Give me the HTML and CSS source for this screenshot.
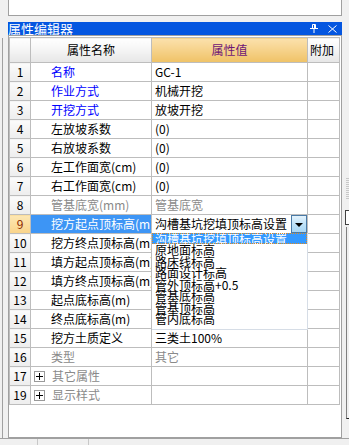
FILE: index.html
```html
<!DOCTYPE html>
<html lang="zh-CN">
<head>
    <meta charset="UTF-8">
    <title>属性编辑器</title>
    <link rel="stylesheet" href="styles.css">
</head>
<body>
    <div class="window">
        <div class="side side-left"><div class="side-line"></div></div>
        <div class="main">
            <div class="top-box"></div>
            <div class="caption">
                <span class="caption-title">属性编辑器</span>
                <span class="caption-btns">
                    <svg width="8" height="9" viewBox="0 0 8 9">
                        <path d="M2.5 0.5h3v4h-3z M0 4.5h8 M4 4.5v4.5" fill="none" stroke="#fff" stroke-width="1"/>
                        <path d="M4.5 0.5v4" stroke="#fff" stroke-width="1"/>
                    </svg>
                    <svg width="9" height="8" viewBox="0 0 9 8">
                        <path d="M0.5 0.5l8 7 M8.5 0.5l-8 7" stroke="#fff" stroke-width="1" fill="none"/>
                    </svg>
                </span>
            </div>
            <div class="panel">
                <table class="grid">
                    <colgroup>
                        <col class="c-num">
                        <col class="c-name">
                        <col class="c-value">
                        <col class="c-extra">
                    </colgroup>
                    <thead>
                        <tr>
                            <th class="h-num"></th>
                            <th class="h-name">属性名称</th>
                            <th class="h-value">属性值</th>
                            <th class="h-extra">附加</th>
                        </tr>
                    </thead>
                    <tbody>
                        <tr><td class="num">1</td><td class="name blue">名称</td><td class="value">GC-1</td><td></td></tr>
                        <tr><td class="num">2</td><td class="name blue">作业方式</td><td class="value">机械开挖</td><td></td></tr>
                        <tr><td class="num">3</td><td class="name blue">开挖方式</td><td class="value">放坡开挖</td><td></td></tr>
                        <tr><td class="num">4</td><td class="name">左放坡系数</td><td class="value">(0)</td><td></td></tr>
                        <tr><td class="num">5</td><td class="name">右放坡系数</td><td class="value">(0)</td><td></td></tr>
                        <tr><td class="num">6</td><td class="name">左工作面宽(cm)</td><td class="value">(0)</td><td></td></tr>
                        <tr><td class="num">7</td><td class="name">右工作面宽(cm)</td><td class="value">(0)</td><td></td></tr>
                        <tr><td class="num">8</td><td class="name gray">管基底宽(mm)</td><td class="value gray">管基底宽</td><td></td></tr>
                        <tr class="current">
                            <td class="num">9</td>
                            <td class="name selected">挖方起点顶标高(m)</td>
                            <td class="value combo-cell">
                                <div class="combo">
                                    <span class="combo-text">沟槽基坑挖填顶标高设置</span>
                                    <span class="combo-btn"><span class="arrow"></span></span>
                                </div>
                            </td>
                            <td></td>
                        </tr>
                        <tr><td class="num">10</td><td class="name">挖方终点顶标高(m)</td><td class="value"></td><td></td></tr>
                        <tr><td class="num">11</td><td class="name">填方起点顶标高(m)</td><td class="value"></td><td></td></tr>
                        <tr><td class="num">12</td><td class="name">填方终点顶标高(m)</td><td class="value"></td><td></td></tr>
                        <tr><td class="num">13</td><td class="name">起点底标高(m)</td><td class="value"></td><td></td></tr>
                        <tr><td class="num">14</td><td class="name">终点底标高(m)</td><td class="value"></td><td></td></tr>
                        <tr><td class="num">15</td><td class="name">挖方土质定义</td><td class="value">三类土100%</td><td></td></tr>
                        <tr><td class="num">16</td><td class="name gray">类型</td><td class="value gray">其它</td><td></td></tr>
                        <tr><td class="num">17</td><td class="name group gray"><span class="plus"></span>其它属性</td><td class="value"></td><td></td></tr>
                        <tr><td class="num">19</td><td class="name group gray"><span class="plus"></span>显示样式</td><td class="value"></td><td></td></tr>
                    </tbody>
                </table>

                <!-- open list of the combo in row 9 -->
                <div class="droplist">
                    <div class="drop-item active">沟槽基坑挖填顶标高设置</div>
                    <div class="drop-item">原地面标高</div>
                    <div class="drop-item">路床线标高</div>
                    <div class="drop-item">路面设计标高</div>
                    <div class="drop-item">管外顶标高+0.5</div>
                    <div class="drop-item">管基底标高</div>
                    <div class="drop-item">管基顶标高</div>
                    <div class="drop-item">管内底标高</div>
                </div>
            </div>
        </div>
        <div class="side side-right">
            <div class="grip"></div>
            <div class="right-box"></div>
            <div class="right-pane"></div>
        </div>
    </div>
    <div class="statusbar">
        <span class="tab tab-first"></span>
        <span class="tab"></span>
    </div>
</body>
</html>
```

FILE: styles.css
```css
body {
    margin: 0;
    width: 349px;
    height: 445px;
    overflow: hidden;
    background: #f0f0f0;
    font-family: "Noto Sans CJK SC", "Noto Sans", sans-serif;
    font-size: 12px;
    color: #000;
}

.window {
    display: flex;
    height: 438px;
}

.side {
    flex: none;
}

.side-left {
    width: 8px;
    display: flex;
    flex-direction: column;
}

.side-line {
    margin: 38px 0 0 2px;
    width: 1px;
    flex: 1;
    background: #a0a0a0;
}

.side-right {
    width: 7px;
    display: flex;
    flex-direction: column;
    align-items: flex-end;
}

.grip {
    margin-top: 178px;
    width: 3px;
    height: 22px;
    background: repeating-linear-gradient(#c8c8c8 0 1px, #f0f0f0 1px 2px);
}

.right-box {
    margin-top: 10px;
    width: 3px;
    height: 13px;
    border: 1px solid #404040;
    border-right: 0;
    background: #fff;
}

.right-pane {
    margin-top: 2px;
    width: 2px;
    height: 191px;
    border-left: 1px solid #808080;
    border-bottom: 1px solid #202020;
}

.main {
    width: 334px;
    display: flex;
    flex-direction: column;
}

.top-box {
    height: 15px;
    background: #fff;
    border: 1px solid #a0a0a0;
    border-top: 0;
}

.caption {
    margin-top: 6px;
    height: 13px;
    background: #0456e0;
    color: #fff;
    display: flex;
    align-items: center;
    justify-content: space-between;
}

.caption-title {
    font-size: 13px;
    line-height: 13px;
}

.caption-btns {
    display: flex;
    align-items: center;
    gap: 10px;
    padding-right: 5px;
}

.caption-btns svg {
    display: block;
}

.panel {
    flex: 1;
    position: relative;
    background: #fff;
    border: 1px solid #a0a0a0;
    padding-top: 1px;
}

.grid {
    border-collapse: collapse;
    table-layout: fixed;
    width: 331px;
}

.c-num { width: 21px; }
.c-name { width: 121px; }
.c-value { width: 156px; }
.c-extra { width: 32px; }

.grid th,
.grid td {
    border: 1px solid #bdbdbd;
    padding: 0;
    line-height: 14px;
    white-space: nowrap;
    overflow: hidden;
}

.grid th {
    height: 24px;
    font-weight: normal;
    font-size: 12px;
    background: linear-gradient(#ffffff, #f4f4f4 50%, #e6e6e6);
}

.grid th.h-value {
    color: #6e1677;
    background: linear-gradient(#fbe1ad, #f6d28a 50%, #efc266);
}

.grid th.h-extra {
    text-align: left;
    padding-left: 2px;
}

.grid td {
    height: 18px;
}

.grid td.num {
    text-align: center;
    background: linear-gradient(#fbfbfb, #ededed);
}

.grid td.name {
    padding-left: 20px;
}

.grid td.value {
    padding-left: 3px;
}

.blue {
    color: #0000ff;
}

.gray {
    color: #8a8a8a;
}

.current td.num {
    background: linear-gradient(#fde7b3, #f9d48a);
    color: #8c2a00;
}

.grid td.selected {
    background: #3d95f5;
    color: #fff;
}

.grid td.group {
    padding-left: 3px;
}

.plus {
    display: inline-block;
    vertical-align: -1px;
    position: relative;
    width: 9px;
    height: 9px;
    margin-right: 7px;
    border: 1px solid #9a9a9a;
    background: #fff;
}

.plus::before,
.plus::after {
    content: "";
    position: absolute;
    background: #000;
}

.plus::before {
    left: 1px;
    top: 4px;
    width: 7px;
    height: 1px;
}

.plus::after {
    left: 4px;
    top: 1px;
    width: 1px;
    height: 7px;
}

.grid td.combo-cell {
    padding: 0;
    position: relative;
}

.combo {
    display: flex;
    align-items: center;
    height: 18px;
    padding-left: 3px;
}

.combo-text {
    flex: 1;
}

.combo-btn {
    width: 14px;
    height: 16px;
    border: 1px solid #4a7aa6;
    background: linear-gradient(#e4f3fd, #bfe2f8 50%, #a7d6f5);
    display: flex;
    align-items: center;
    justify-content: center;
}

.arrow {
    width: 0;
    height: 0;
    border-left: 4px solid transparent;
    border-right: 4px solid transparent;
    border-top: 4px solid #000;
    margin-top: 1px;
}

.droplist {
    position: absolute;
    left: 143px;
    top: 197px;
    width: 155px;
    height: 96px;
    background: #fff;
    border-right: 1px solid #d6dde6;
    border-bottom: 1px solid #d6dde6;
    overflow: hidden;
}

.drop-item {
    height: 11.5px;
    line-height: 11.5px;
    padding-left: 3px;
    white-space: nowrap;
}

.drop-item.active {
    height: 11px;
    line-height: 11px;
    background: #3399ff;
    color: #fff;
    outline: 1px dotted #e08a20;
    outline-offset: -1px;
}

.statusbar {
    height: 7px;
    border-top: 1px solid #a0a0a0;
    display: flex;
}

.tab {
    width: 50px;
    border-right: 1px solid #c8c8c8;
}

.tab-first {
    width: 37px;
}
```
